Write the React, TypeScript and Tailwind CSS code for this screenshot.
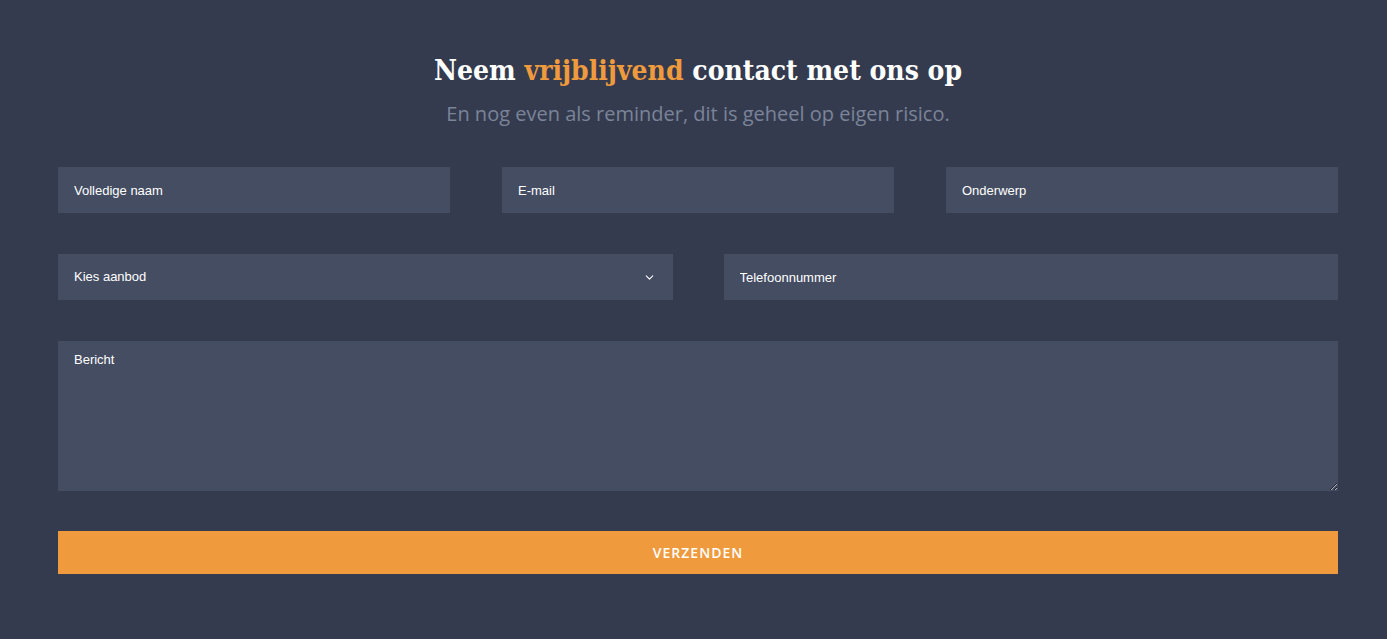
import React from "react";
import {ChevronDown} from "lucide-react";

const field =
    "h-[46px] w-full bg-[#454d62] px-4 text-[13px] font-medium text-white placeholder:text-white outline-none font-['Liberation_Sans',Arial,sans-serif]";

const App: React.FC = () => {
    return (
        <div className="w-full min-h-[639px] bg-[#343b4f] pt-[52px] pl-[58px]">
            <div className="w-[1280px] flex flex-col">
                {/* Heading */}
                <h2 className="text-center text-[28px] leading-[38px] font-bold text-white font-['DejaVu_Serif_Condensed','DejaVu_Serif',serif] [font-stretch:condensed]">
                    Neem <span className="text-[#ef9a3c]">vrijblijvend</span> contact met ons op
                </h2>
                <p className="mt-[11px] text-center text-[20px] leading-[26px] text-[#7b8498] font-['Open_Sans',sans-serif]">
                    En nog even als reminder, dit is geheel op eigen risico.
                </p>

                {/* Row 1 */}
                <div className="mt-[40px] grid grid-cols-3 gap-x-[52px]">
                    <input className={field} placeholder="Volledige naam"/>
                    <input className={field} placeholder="E-mail"/>
                    <input className={field} placeholder="Onderwerp"/>
                </div>

                {/* Row 2 */}
                <div className="mt-[41px] grid grid-cols-2 gap-x-[51px]">
                    <div className="relative">
                        <select className={field + " appearance-none"} defaultValue="">
                            <option value="">Kies aanbod</option>
                        </select>
                        <ChevronDown
                            className="absolute right-[17px] top-[17px] pointer-events-none text-white"
                            size={13}
                            strokeWidth={2}
                        />
                    </div>
                    <input className={field} placeholder="Telefoonnummer"/>
                </div>

                {/* Message */}
                <textarea
                    className="mt-[41px] h-[150px] w-full bg-[#454d62] px-4 pt-[9px] text-[13px] font-medium text-white placeholder:text-white outline-none font-['Liberation_Sans',Arial,sans-serif]"
                    placeholder="Bericht"
                />

                {/* Submit */}
                <button
                    className="mt-[40px] h-[43px] w-full bg-[#ef9a3c] text-[14px] font-semibold tracking-[1px] text-white font-['Open_Sans',sans-serif]">
                    VERZENDEN
                </button>
            </div>
        </div>
    );
};

export default App;
